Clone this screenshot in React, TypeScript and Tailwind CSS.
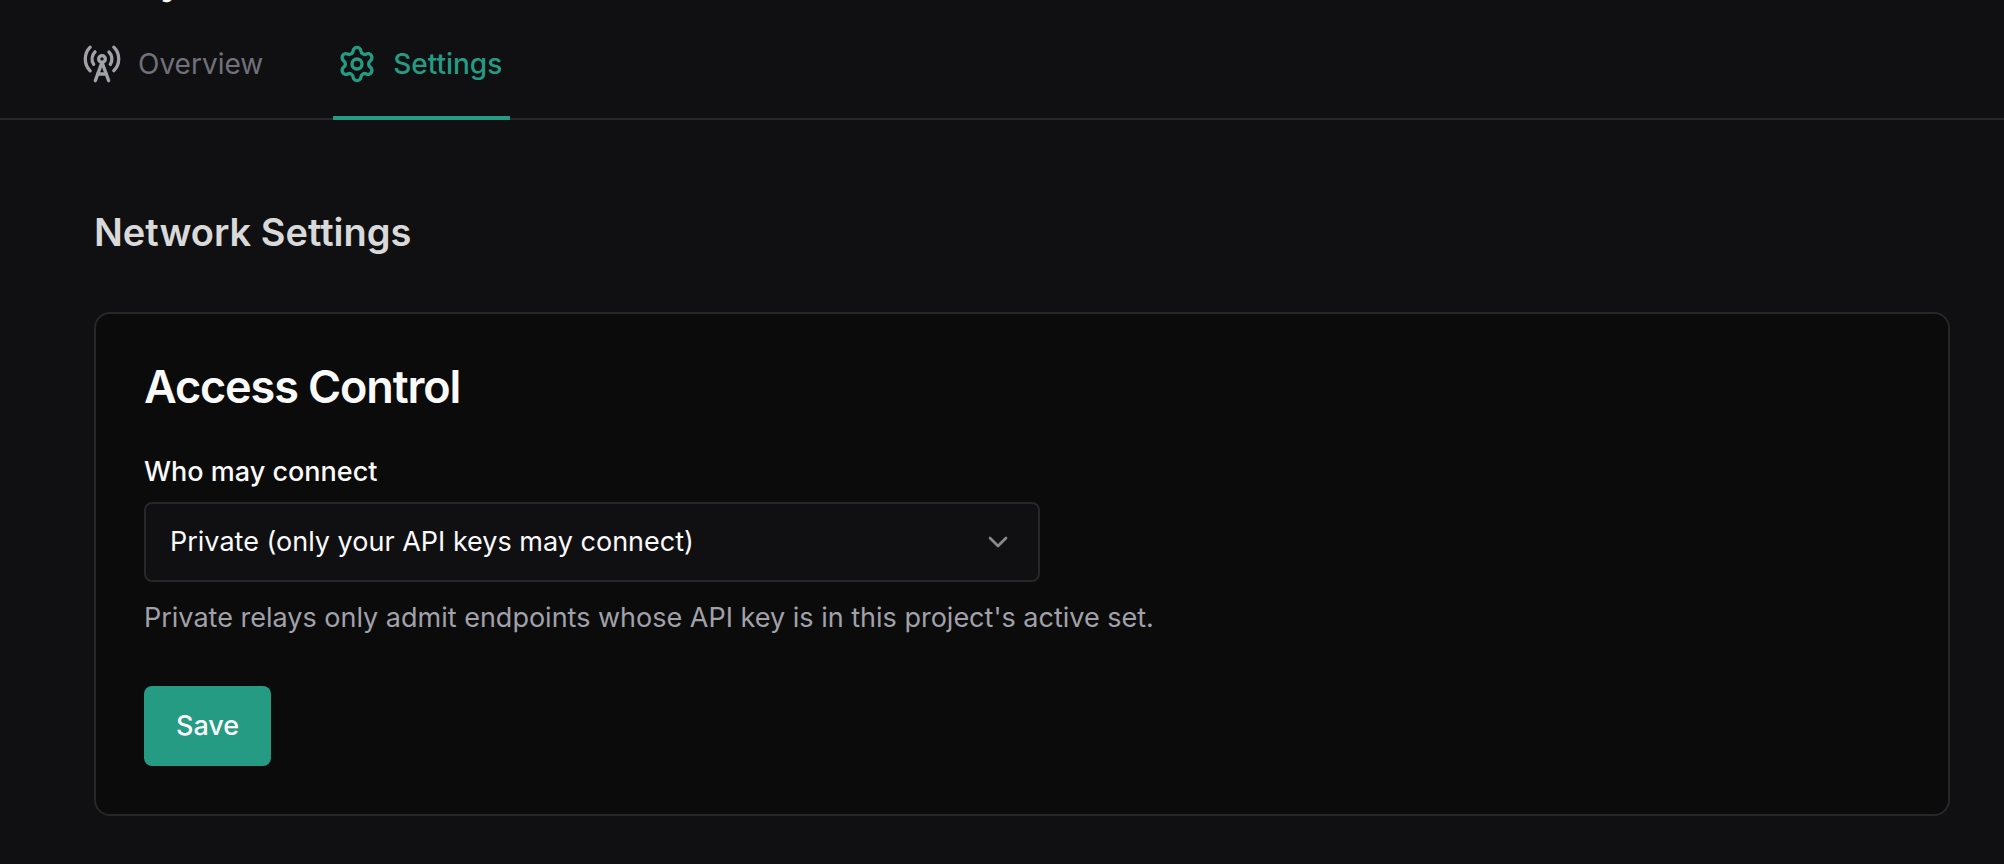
import React from "react";
import { ChevronDown, RadioTower, Settings } from "lucide-react";

const ProjectTabs = () => {
  return (
    <nav className="border-b-2 border-[#27272a] pl-[78px]">
      <div className="-mb-0.5 flex gap-[62px]">
        {/* Overview */}
        <a
          href="#overview"
          className="flex h-[108px] items-center gap-4 border-b-4 border-transparent pr-2 pl-1 text-[28px] leading-10 text-[#71717a]"
        >
          <RadioTower className="size-10 text-[#a1a1aa]" aria-hidden="true" />
          Overview
        </a>

        {/* Settings */}
        <a
          href="#settings"
          aria-current="page"
          className="flex h-[108px] items-center gap-4 border-b-4 border-[#259b83] pr-2 pl-1 text-[28px] leading-10 font-medium text-[#259b83]"
        >
          <Settings className="size-10" aria-hidden="true" />
          Settings
        </a>
      </div>
    </nav>
  );
};

const AccessControl = () => {
  return (
    <section className="rounded-2xl border-2 border-[#27272a] bg-[#0b0b0b] p-12">
      <h3 className="text-[45px] leading-[50px] font-semibold tracking-tight text-[#fafafa]">
        Access Control
      </h3>

      <form className="mt-[46px] flex flex-col items-start">
        <label
          htmlFor="access"
          className="text-[27px] leading-7 font-medium text-[#fafafa]"
        >
          Who may connect
        </label>

        <div className="relative mt-4 w-full max-w-4xl">
          <select
            id="access"
            defaultValue="private"
            className="h-20 w-full appearance-none rounded-lg border-2 border-[#27272a] bg-[#101012] px-6 text-[27px] leading-10 text-[#fafafa]"
          >
            <option value="private">
              Private (only your API keys may connect)
            </option>
            <option value="public">Public (anyone may connect)</option>
          </select>
          <ChevronDown
            className="pointer-events-none absolute top-6 right-[26px] size-8 text-[#8a8a8c]"
            aria-hidden="true"
          />
        </div>

        <p className="mt-4 text-[27px] leading-10 text-[#a1a1aa]">
          Private relays only admit endpoints whose API key is in this
          project&apos;s active set.
        </p>

        <button
          type="button"
          className="mt-12 h-20 rounded-lg bg-[#259b83] px-8 text-[27px] leading-10 font-medium text-[#fafafa]"
        >
          Save
        </button>
      </form>
    </section>
  );
};

const App = () => {
  return (
    <div className="min-h-screen bg-[#101012] font-['Inter',sans-serif]">
      <header className="flex h-3 flex-col justify-end overflow-hidden pb-3 pl-[78px]">
        <h1 className="shrink-0 text-[40px] leading-10 font-semibold text-[#fafafa]">
          Relay
        </h1>
      </header>
      <ProjectTabs />
      <main className="pt-[84px] pr-[54px] pb-12 pl-[94px]">
        <h2 className="mb-[52px] text-[38px] leading-14 font-semibold text-[#d9d9d9]">
          Network Settings
        </h2>
        <AccessControl />
      </main>
    </div>
  );
};

export default App;
